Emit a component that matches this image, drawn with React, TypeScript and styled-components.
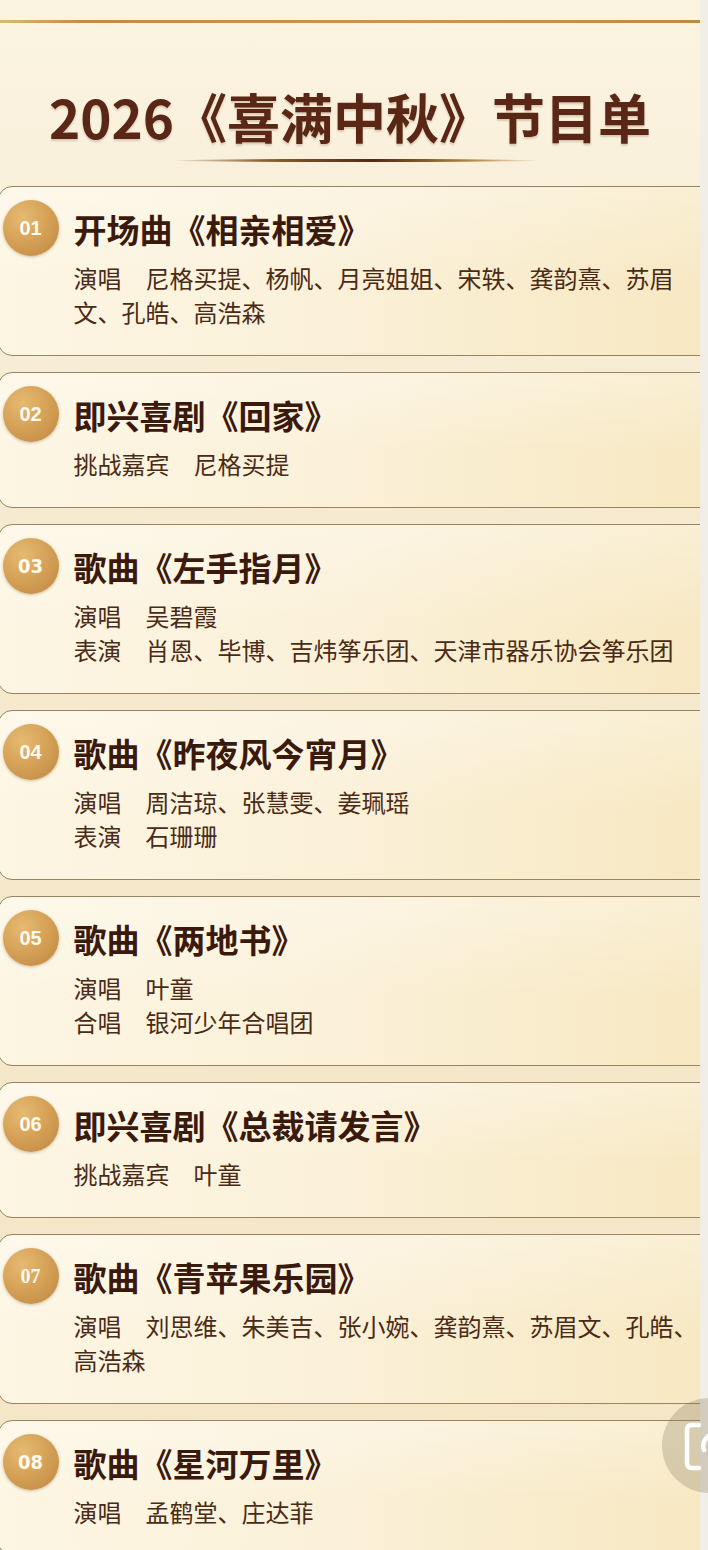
import { createGlobalStyle, styled } from 'styled-components';

const programs = [
    {
        no: "01",
        title: "开场曲《相亲相爱》",
        credits: [
            { label: "演唱", names: ["尼格买提、杨帆、月亮姐姐、宋轶、龚韵熹、苏眉", "文、孔皓、高浩森"] },
        ],
    },
    {
        no: "02",
        title: "即兴喜剧《回家》",
        credits: [{ label: "挑战嘉宾", names: ["尼格买提"] }],
    },
    {
        no: "03",
        title: "歌曲《左手指月》",
        narrow: true,
        credits: [
            { label: "演唱", names: ["吴碧霞"] },
            { label: "表演", names: ["肖恩、毕博、吉炜筝乐团、天津市器乐协会筝乐团"] },
        ],
    },
    {
        no: "04",
        title: "歌曲《昨夜风今宵月》",
        credits: [
            { label: "演唱", names: ["周洁琼、张慧雯、姜珮瑶"] },
            { label: "表演", names: ["石珊珊"] },
        ],
    },
    {
        no: "05",
        title: "歌曲《两地书》",
        credits: [
            { label: "演唱", names: ["叶童"] },
            { label: "合唱", names: ["银河少年合唱团"] },
        ],
    },
    {
        no: "06",
        title: "即兴喜剧《总裁请发言》",
        credits: [{ label: "挑战嘉宾", names: ["叶童"] }],
    },
    {
        no: "07",
        title: "歌曲《青苹果乐园》",
        serif: true,
        credits: [
            { label: "演唱", names: ["刘思维、朱美吉、张小婉、龚韵熹、苏眉文、孔皓、", "高浩森"] },
        ],
    },
    {
        no: "08",
        title: "歌曲《星河万里》",
        narrow: true,
        credits: [{ label: "演唱", names: ["孟鹤堂、庄达菲"] }],
    },
];

const GlobalStyle = createGlobalStyle`
    html, body {
        margin: 0;
        padding: 0;
        background: #f1eee7;
        overflow-x: hidden;
    }
    body {
        font-family: "Noto Sans CJK SC", "Noto Sans", sans-serif;
    }
`;

const Page = styled.div`
    position: relative;
    width: 708px;
    overflow: hidden;
`;

const Sheet = styled.main`
    width: 700px;
    overflow: hidden;
    padding-top: 20px;
    padding-bottom: 40px;
    background: linear-gradient(180deg, #fbf4e1 0%, #f6ead0 30%, #f4e5c4 100%);
`;

const TopRule = styled.div`
    height: 3px;
    background: linear-gradient(90deg, #dcb77c 0%, #c38c45 12%, #c99550 60%, #c08a44 100%);
`;

const Title = styled.h1`
    margin: 60px 0 0;
    text-align: center;
    font-size: 53px;
    line-height: 66px;
    font-weight: 700;
    color: #5a2616;
    text-shadow: 0 2px 2px rgba(90, 40, 10, 0.2);
`;

const Ornament = styled.div`
    width: 370px;
    height: 3px;
    margin: 10px 0 0 170px;
    border-radius: 50%;
    background: linear-gradient(90deg, rgba(190, 150, 90, 0) 0%, #8a6034 25%, #4e2c14 55%, #b0803e 80%, rgba(210, 170, 100, 0) 100%);
`;

const List = styled.section`
    display: flex;
    flex-direction: column;
    gap: 16px;
    margin: 24px -20px 0 -2px;
`;

const Card = styled.article`
    display: flex;
    gap: 15px;
    padding: 20px 0 26px 3.5px;
    border: 1.5px solid #9a8360;
    border-radius: 14px;
    background:
        linear-gradient(180deg, rgba(255, 255, 255, 0.3) 0%, rgba(255, 255, 255, 0) 60%),
        linear-gradient(90deg, #fdf6e3 0%, #fbf1d9 45%, #f7e8c1 100%);
`;

const Badge = styled.div<{ $font: string }>`
    flex: none;
    width: 56px;
    height: 56px;
    margin-top: -7px;
    border-radius: 50%;
    display: flex;
    align-items: center;
    justify-content: center;
    background: radial-gradient(circle at 35% 30%, #e6ba72 0%, #d4a055 50%, #bd8540 100%);
    box-shadow: 0 1px 3px rgba(120, 80, 30, 0.35);
    color: #fffaf0;
    font-family: ${p => p.$font};
    font-weight: 700;
    font-size: 20px;
`;

const Content = styled.div`
    flex: 1;
`;

const ItemTitle = styled.h2`
    margin: 0;
    font-size: 33px;
    line-height: 44px;
    font-weight: 700;
    color: #3b1a0e;
`;

const Credits = styled.div`
    margin-top: 10px;
`;

const Line = styled.p`
    margin: 0;
    font-size: 24px;
    line-height: 34px;
    color: #4a2b17;
    white-space: nowrap;
`;

const Label = styled.span`
    margin-right: 24px;
`;

const FloatButton = styled.div`
    position: absolute;
    left: 662px;
    top: 1398px;
    width: 95px;
    height: 95px;
`;

function ScanButton() {
    return (
        <FloatButton>
            <svg width="95" height="95" viewBox="0 0 95 95">
                <circle cx="47.5" cy="47.5" r="47.5" fill="rgba(140,125,95,0.3)" />
                <path d="M37 27 H30 Q25 27 25 32 V65 Q25 70 30 70 H37" fill="none" stroke="#fff" strokeWidth="4.5" strokeLinecap="round" />
                <path d="M42 52 A12 12 0 0 1 54 36" fill="none" stroke="#fff" strokeWidth="4.5" strokeLinecap="round" />
            </svg>
        </FloatButton>
    );
}

export default function App() {
    return (
        <Page>
            <GlobalStyle />
            <Sheet>
                <TopRule />
                <Title>2026《喜满中秋》节目单</Title>
                <Ornament />
                <List>
                    {programs.map(item => (
                        <Card key={item.no}>
                            <Badge $font={item.serif ? '"Liberation Serif", serif' : item.narrow ? '"DejaVu Sans Condensed", "Liberation Sans", sans-serif' : '"Liberation Sans", sans-serif'}>
                                {item.no}
                            </Badge>
                            <Content>
                                <ItemTitle>{item.title}</ItemTitle>
                                <Credits>
                                    {item.credits.map(c =>
                                        c.names.map((part, i) => (
                                            <Line key={c.label + i}>
                                                {i === 0 && <Label>{c.label}</Label>}
                                                {part}
                                            </Line>
                                        ))
                                    )}
                                </Credits>
                            </Content>
                        </Card>
                    ))}
                </List>
            </Sheet>
            <ScanButton />
        </Page>
    );
}
